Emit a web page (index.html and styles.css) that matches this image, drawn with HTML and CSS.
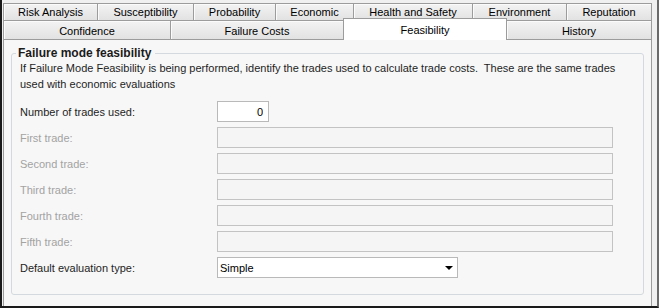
FILE: index.html
```html
<!DOCTYPE html>
<html>
<head>
    <title>Failure mode feasibility</title>
    <link rel="stylesheet" href="styles.css">
</head>
<body>
    <div class="window">
        <div class="tab-row tab-row-back">
            <div class="tab">Risk Analysis</div>
            <div class="tab">Susceptibility</div>
            <div class="tab">Probability</div>
            <div class="tab">Economic</div>
            <div class="tab">Health and Safety</div>
            <div class="tab">Environment</div>
            <div class="tab">Reputation</div>
        </div>
        <div class="tab-row tab-row-front">
            <div class="tab">Confidence</div>
            <div class="tab">Failure Costs</div>
            <div class="tab tab-selected">Feasibility</div>
            <div class="tab">History</div>
        </div>

        <div class="panel">
            <fieldset class="group">
                <legend>Failure mode feasibility</legend>
                <p class="intro">If Failure Mode Feasibility is being performed, identify the trades used to calculate trade costs.&nbsp; These are the same trades used with economic evaluations</p>

                <div class="field-row">
                    <label class="field-label" for="tradeCount">Number of trades used:</label>
                    <input class="field-input field-number" type="text" id="tradeCount" value="0">
                </div>
                <div class="field-row">
                    <label class="field-label disabled" for="trade1">First trade:</label>
                    <input class="field-input field-wide" type="text" id="trade1" disabled>
                </div>
                <div class="field-row">
                    <label class="field-label disabled" for="trade2">Second trade:</label>
                    <input class="field-input field-wide" type="text" id="trade2" disabled>
                </div>
                <div class="field-row">
                    <label class="field-label disabled" for="trade3">Third trade:</label>
                    <input class="field-input field-wide" type="text" id="trade3" disabled>
                </div>
                <div class="field-row">
                    <label class="field-label disabled" for="trade4">Fourth trade:</label>
                    <input class="field-input field-wide" type="text" id="trade4" disabled>
                </div>
                <div class="field-row">
                    <label class="field-label disabled" for="trade5">Fifth trade:</label>
                    <input class="field-input field-wide" type="text" id="trade5" disabled>
                </div>
                <div class="field-row">
                    <label class="field-label" for="evalType">Default evaluation type:</label>
                    <div class="select-wrap">
                        <select class="field-select" id="evalType">
                            <option>Simple</option>
                            <option>Detailed</option>
                        </select>
                    </div>
                </div>
            </fieldset>
        </div>
    </div>
</body>
</html>
```

FILE: styles.css
```css
body {
    margin: 0;
    font-family: "Liberation Sans", Arial, sans-serif;
    font-size: 11px;
    color: #1e1e1e;
    background-color: #f0f0f0;
}

.window {
    width: 659px;
    height: 308px;
    box-sizing: border-box;
    border-left: 2px solid #1a1a1a;
    border-bottom: 2px solid #1a1a1a;
    border-right: 2px solid #6a6a6a;
    padding: 3px 5px 0 1px;
    display: flex;
    flex-direction: column;
}

.tab-row {
    display: flex;
}

.tab-row-back {
    height: 17px;
}

.tab-row-front {
    height: 19px;
}

.tab {
    box-sizing: border-box;
    border: 1px solid #9c9c9c;
    border-right: none;
    border-bottom: none;
    background: linear-gradient(#f3f3f3, #e2e2e2);
    box-shadow: inset 1px 1px 0 #fbfbfb;
    color: #000;
    display: flex;
    align-items: center;
    justify-content: center;
}

.tab:last-child {
    border-right: 1px solid #9c9c9c;
}

.tab-row-back .tab:nth-child(1) { width: 94px; }
.tab-row-back .tab:nth-child(2) { width: 96px; }
.tab-row-back .tab:nth-child(3) { width: 82px; }
.tab-row-back .tab:nth-child(4) { width: 78px; }
.tab-row-back .tab:nth-child(5) { width: 119px; }
.tab-row-back .tab:nth-child(6) { width: 94px; }
.tab-row-back .tab:nth-child(7) { width: 86px; }

.tab-row-front .tab:nth-child(1) { width: 167px; }
.tab-row-front .tab:nth-child(2) { width: 173px; }
.tab-row-front .tab:nth-child(3) { width: 164px; }
.tab-row-front .tab:nth-child(4) { width: 145px; }

.tab-row-front .tab {
    padding-top: 1px;
}

.tab-selected {
    border-right: 1px solid #9c9c9c;
    background: #fff;
    box-shadow: none;
    margin-top: -2px;
    margin-bottom: -1px;
    padding-top: 0;
    padding-bottom: 1px;
    position: relative;
    z-index: 1;
}

.tab-selected + .tab {
    border-left: none;
}

.panel {
    flex: 1;
    border: 1px solid #9c9c9c;
    border-bottom: none;
    background-color: #f7f7f7;
    padding-top: 6px;
}

.group {
    margin: 0 7px;
    padding: 0 8px 16px 8px;
    border: 1px solid #d3d9de;
    border-radius: 3px;
}

.group legend {
    padding: 0 4px 0 2px;
    margin-left: -4px;
    font-weight: bold;
    font-size: 12px;
    line-height: 14px;
    color: #1b1b1b;
}

.intro {
    margin: 0 0 9px 0;
    line-height: 16px;
}

.field-row {
    display: flex;
    align-items: center;
    height: 21px;
    margin-bottom: 5px;
}

.field-row:last-child {
    margin-bottom: 0;
}

.field-label {
    width: 197px;
    flex-shrink: 0;
}

.field-label.disabled {
    color: #a3a3a3;
}

.field-input {
    box-sizing: border-box;
    height: 21px;
    margin: 0;
    border: 1px solid #b9b9b9;
    background-color: #fff;
    font-family: inherit;
    font-size: 11px;
    color: #000;
    padding: 0 5px;
    outline: none;
}

.field-number {
    width: 52px;
    text-align: right;
}

.field-wide {
    width: 396px;
}

.field-input:disabled {
    background-color: #f5f5f5;
    border-color: #c3c3c3;
}

.select-wrap {
    position: relative;
    width: 241px;
    height: 21px;
}

.field-select {
    appearance: none;
    -webkit-appearance: none;
    box-sizing: border-box;
    width: 100%;
    height: 21px;
    margin: 0;
    padding: 0 2px;
    border: 1px solid #b9b9b9;
    border-radius: 0;
    background-color: #fff;
    font-family: inherit;
    font-size: 11px;
    color: #000;
    outline: none;
}

.select-wrap::after {
    content: "";
    position: absolute;
    right: 5px;
    top: 9px;
    border-left: 4px solid transparent;
    border-right: 4px solid transparent;
    border-top: 4px solid #000;
    pointer-events: none;
}
```
